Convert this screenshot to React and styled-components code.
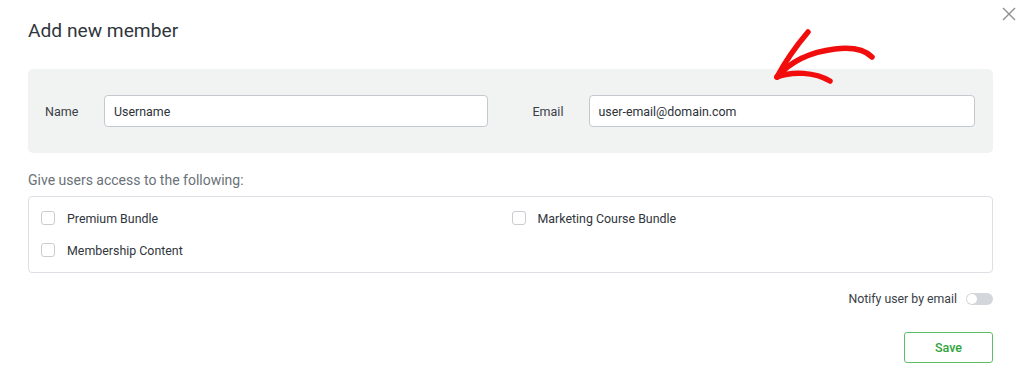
import React from "react";
import styled, { createGlobalStyle } from "styled-components";

const Global = createGlobalStyle`
  html, body { margin: 0; padding: 0; background: #fff; }
  body { font-family: Roboto, "Noto Sans", "Liberation Sans", sans-serif; }
  * { box-sizing: border-box; }
`;

const Dialog = styled.div`
  position: relative;
  width: 1024px;
  height: 392px;
  padding: 18px 31px 0 28px;
`;

const Title = styled.h2`
  margin: 0;
  font-size: 19.2px;
  line-height: 26px;
  font-weight: 400;
  color: #30363c;
`;

const CloseButton = styled.button`
  position: absolute;
  top: 5px;
  right: 6px;
  width: 18px;
  height: 18px;
  padding: 0;
  border: none;
  background: none;
  display: flex;
  align-items: center;
  justify-content: center;
`;

const Panel = styled.div`
  margin-top: 25px;
  background: #f1f2f2;
  border-radius: 5px;
  height: 84px;
  padding: 0 18px 0 17px;
  display: flex;
  align-items: center;
  gap: 45px;
`;

const Field = styled.div`
  flex: 1;
  display: flex;
  align-items: center;
`;

const Label = styled.label`
  width: ${(p) => p.$w}px;
  flex-shrink: 0;
  font-size: 12.5px;
  color: #3a4046;
`;

const Input = styled.input`
  flex: 1;
  min-width: 0;
  height: 32px;
  border: 1px solid #c4c9cf;
  border-radius: 4px;
  background: #fff;
  padding: 0 9px;
  font-family: inherit;
  font-size: 12.4px;
  color: #2c3238;
  outline: none;
`;

const SectionTitle = styled.div`
  margin-top: 19px;
  font-size: 14px;
  line-height: 16px;
  color: #6a7178;
`;

const AccessBox = styled.div`
  margin-top: 8px;
  border: 1px solid #dcdfe3;
  border-radius: 4px;
  height: 77px;
  padding: 5px 10px 0 12px;
  display: grid;
  grid-template-columns: 1fr 1fr;
  grid-auto-rows: 32px;
`;

const Option = styled.label`
  display: flex;
  align-items: center;
  gap: 12px;
  font-size: 12.4px;
  color: #30363c;
`;

const Box = styled.span`
  width: 14px;
  height: 14px;
  border: 1px solid #c9cdd2;
  border-radius: 3px;
  background: #fff;
  flex-shrink: 0;
`;

const NotifyRow = styled.div`
  margin-top: 18px;
  height: 16px;
  display: flex;
  justify-content: flex-end;
  align-items: center;
  gap: 9px;
  font-size: 12.3px;
  color: #3a4046;
`;

const Toggle = styled.span`
  position: relative;
  width: 27px;
  height: 12px;
  border-radius: 6px;
  background: #d3d7db;
  &::after {
    content: "";
    position: absolute;
    left: 1px;
    top: 1px;
    width: 10px;
    height: 10px;
    border-radius: 50%;
    background: #fff;
  }
`;

const Footer = styled.div`
  margin-top: 25px;
  display: flex;
  justify-content: flex-end;
`;

const SaveButton = styled.button`
  width: 89px;
  height: 31px;
  border: 1px solid #5cbf66;
  border-radius: 3px;
  background: #fff;
  color: #2ea43c;
  font-family: inherit;
  font-size: 12.5px;
  font-weight: 500;
`;

const Arrow = styled.svg`
  position: absolute;
  left: 0;
  top: 0;
  pointer-events: none;
`;

export default function App() {
  return (
    <>
      <Global />
      <Dialog>
        <Title>Add new member</Title>
        <CloseButton aria-label="Close">
          <svg width="14" height="14" viewBox="0 0 14 14">
            <path d="M1 1 L13 13 M13 1 L1 13" stroke="#8c8f92" strokeWidth="1.4" />
          </svg>
        </CloseButton>
        <Panel>
          <Field>
            <Label $w={59}>Name</Label>
            <Input defaultValue="Username" />
          </Field>
          <Field>
            <Label $w={56}>Email</Label>
            <Input defaultValue="user-email@domain.com" />
          </Field>
        </Panel>
        <SectionTitle>Give users access to the following:</SectionTitle>
        <AccessBox>
          <Option><Box />Premium Bundle</Option>
          <Option><Box />Marketing Course Bundle</Option>
          <Option><Box />Membership Content</Option>
        </AccessBox>
        <NotifyRow>
          Notify user by email
          <Toggle />
        </NotifyRow>
        <Footer>
          <SaveButton>Save</SaveButton>
        </Footer>
        <Arrow width="1024" height="392" viewBox="0 0 1024 392">
          <g fill="none" stroke="#f20d0d" strokeWidth="5.5" strokeLinecap="round" strokeLinejoin="round">
            <path d="M808 32 C797 45 786 60 777 77" />
            <path d="M777 77 C790 62 810 52 835 49 C852 47 865 50 872 57" />
            <path d="M777 77 C792 71 815 72 830 81" />
          </g>
        </Arrow>
      </Dialog>
    </>
  );
}
